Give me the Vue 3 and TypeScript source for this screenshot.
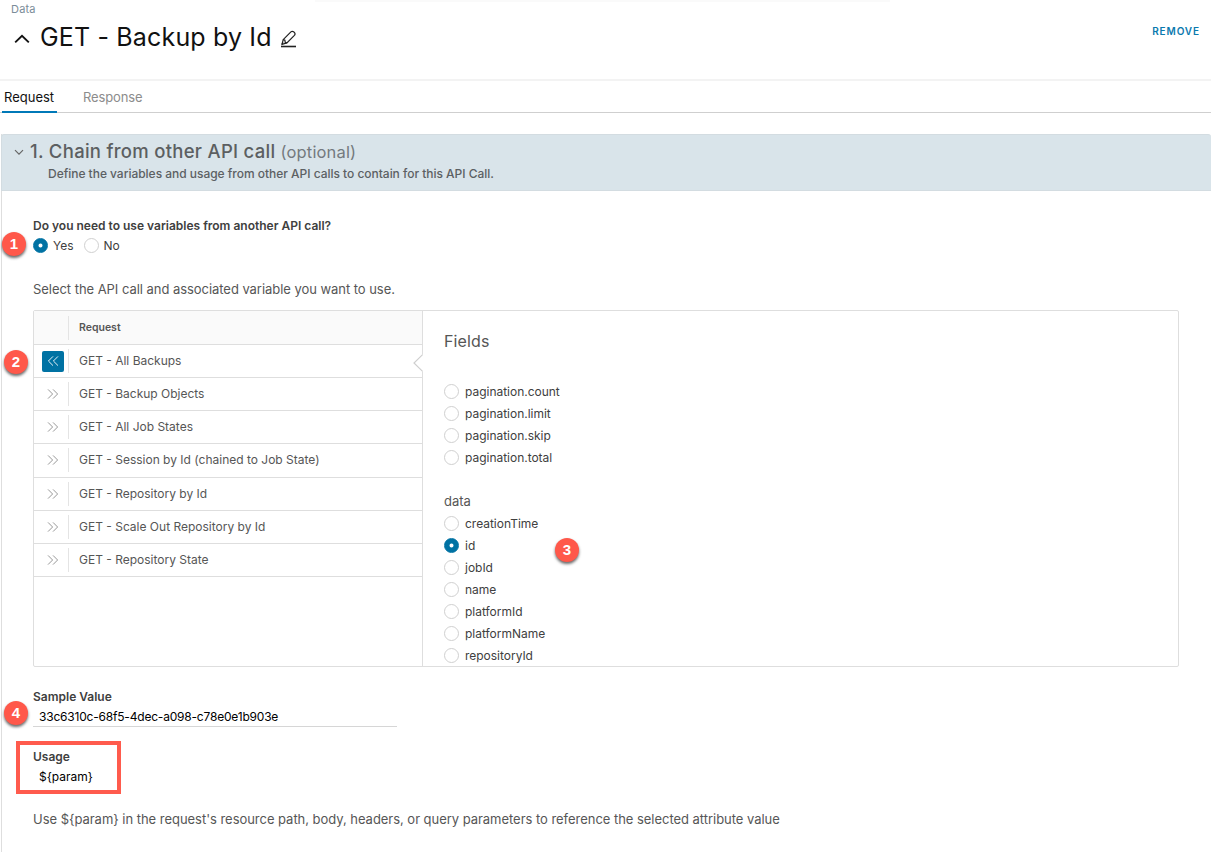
<script setup lang="ts">
import { ref } from 'vue'

interface Field {
  name: string
}

const requests: string[] = [
  'GET - All Backups',
  'GET - Backup Objects',
  'GET - All Job States',
  'GET - Session by Id (chained to Job State)',
  'GET - Repository by Id',
  'GET - Scale Out Repository by Id',
  'GET - Repository State',
]
const activeRequest = ref(0)

const paginationFields: Field[] = [
  { name: 'pagination.count' },
  { name: 'pagination.limit' },
  { name: 'pagination.skip' },
  { name: 'pagination.total' },
]
const dataFields: Field[] = [
  { name: 'creationTime' },
  { name: 'id' },
  { name: 'jobId' },
  { name: 'name' },
  { name: 'platformId' },
  { name: 'platformName' },
  { name: 'repositoryId' },
]
const selectedField = ref('id')
const useVariables = ref(true)
const usage = '${param}'
</script>

<template>
  <div class="page">
    <div class="top-shade"></div>
    <header class="header">
      <div class="crumb">Data</div>
      <div class="title-row">
        <svg class="caret" width="16" height="10" viewBox="0 0 16 10">
          <path d="M1.2 8.4 L8 1.8 L14.8 8.4" />
        </svg>
        <h1 class="title">GET - Backup by Id</h1>
        <svg class="pencil" width="18" height="18" viewBox="0 0 18 18">
          <path d="M3.2 9.6 L10.9 1.9 Q12.2 .7 13.6 1.8 L14.5 2.7 Q15.6 4 14.4 5.3 L6.9 12.9 L2 14.3 Z" />
          <path d="M3.2 9.6 L4.9 10.2 L5.2 12.2 L6.9 12.9 M2 14.3 L3 12.4" />
          <path class="rule" d="M1 16.5 H16" />
        </svg>
        <button class="remove" type="button">REMOVE</button>
      </div>
    </header>

    <nav class="tabs">
      <a class="tab active">Request</a>
      <a class="tab">Response</a>
    </nav>

    <section class="panel">
      <div class="band">
        <svg class="chevron" width="10" height="7" viewBox="0 0 10 7">
          <path d="M1 1.2 L5 5.2 L9 1.2" />
        </svg>
        <div>
          <h2 class="step">1. Chain from other API call <span class="optional">(optional)</span></h2>
          <p class="desc">Define the variables and usage from other API calls to contain for this API Call.</p>
        </div>
      </div>

      <div class="content">
        <div class="question">Do you need to use variables from another API call?</div>
        <div class="answers">
          <span class="badge b1">1</span>
          <label class="choice" @click="useVariables = true">
            <i class="radio" :class="{ on: useVariables }"></i><span>Yes</span>
          </label>
          <label class="choice" @click="useVariables = false">
            <i class="radio" :class="{ on: !useVariables }"></i><span>No</span>
          </label>
        </div>
        <p class="select-hint">Select the API call and associated variable you want to use.</p>

        <div class="picker">
          <div class="requests">
            <div class="row head">
              <div class="cell-icon"></div>
              <div class="cell-name">Request</div>
            </div>
            <div
              v-for="(name, i) in requests"
              :key="name"
              class="row"
              :class="{ active: i === activeRequest }"
              @click="activeRequest = i"
            >
              <span v-if="i === activeRequest" class="badge b2">2</span>
              <div class="cell-icon">
                <span class="toggle">
                  <svg width="12" height="12" viewBox="0 0 12 12">
                    <path d="M1 1.4 L5.6 6 L1 10.6 M6 1.4 L10.6 6 L6 10.6" />
                  </svg>
                </span>
              </div>
              <div class="cell-name">{{ name }}</div>
              <svg v-if="i === activeRequest" class="pointer" width="10" height="18" viewBox="0 0 10 18">
                <path class="fill" d="M10 0 L1 9 L10 18 Z" />
                <path class="edge" d="M9.6 .6 L1 9 L9.6 17.4" />
              </svg>
            </div>
          </div>
          <div class="fields">
            <span class="badge b3">3</span>
            <h3 class="fields-title">Fields</h3>
            <label v-for="f in paginationFields" :key="f.name" class="field" @click="selectedField = f.name">
              <i class="radio" :class="{ on: f.name === selectedField }"></i><span>{{ f.name }}</span>
            </label>
            <div class="group">data</div>
            <label v-for="f in dataFields" :key="f.name" class="field" @click="selectedField = f.name">
              <i class="radio" :class="{ on: f.name === selectedField }"></i><span>{{ f.name }}</span>
            </label>
          </div>
        </div>

        <div class="sample">
          <span class="badge b4">4</span>
          <div class="label">Sample Value</div>
          <div class="value uuid">33c6310c-68f5-4dec-a098-c78e0e1b903e</div>
        </div>
        <div class="usage">
          <div class="label">Usage</div>
          <div class="value">{{ usage }}</div>
        </div>
        <p class="usage-hint">
          Use {{ usage }} in the request's resource path, body, headers, or query parameters to reference the selected attribute value
        </p>
      </div>
    </section>
  </div>
</template>

<style>
body {
  background: #fff;
  overflow: hidden;
}
</style>

<style scoped>
.page {
  position: relative;
  width: 1211px;
  height: 852px;
  overflow: hidden;
  display: flex;
  flex-direction: column;
  background: #fff;
  color: #565656;
  font-family: Inter, "Open Sans", sans-serif;
  font-size: 12px;
  box-sizing: border-box;
}
.page * {
  box-sizing: border-box;
}
h1, h2, h3, p {
  margin: 0;
  font-weight: 400;
}
svg {
  display: block;
  flex: none;
}
path {
  fill: none;
}
.top-shade {
  position: absolute;
  left: 315px;
  top: 0;
  width: 575px;
  height: 2px;
  background: #fafafa;
}
.header {
  height: 81px;
  flex: none;
  border-bottom: 2px solid #f3f3f3;
}
.crumb {
  height: 17px;
  line-height: 18px;
  padding-left: 11px;
  font-size: 11px;
  letter-spacing: 0.2px;
  color: #7b8d99;
}
.title-row {
  display: flex;
  align-items: center;
  height: 40px;
  padding: 0 12px 0 14px;
}
.caret path {
  stroke: #111;
  stroke-width: 1.9;
}
.caret {
  margin-top: 3px;
}
.title {
  width: 232px;
  margin-left: 10px;
  line-height: 36px;
  font-size: 25px;
  letter-spacing: 0.16px;
  color: #111;
  white-space: nowrap;
}
.pencil {
  margin: 3px 0 0 8px;
}
.pencil path {
  stroke: #222;
  stroke-width: 1.2;
}
.pencil .rule {
  stroke-width: 1.6;
}
.remove {
  margin: -13px 0 0 auto;
  padding: 0;
  border: 0;
  background: none;
  font: 600 10px/16px Inter, sans-serif;
  letter-spacing: 0.9px;
  margin-right: -1px;
  color: #0a79ae;
}
.tabs {
  display: flex;
  flex: none;
  height: 32px;
  padding-left: 2px;
  border-bottom: 1px solid #cfcfcf;
}
.tab {
  height: 32px;
  line-height: 33px;
  padding: 0 2px;
  margin-right: 24px;
  font-size: 13px;
  letter-spacing: -0.12px;
  color: #8c8c8c;
}
.tab.active {
  width: 55px;
  letter-spacing: 0;
  color: #111;
  border-bottom: 2px solid #0079b8;
}
.panel {
  flex: 1;
  margin: 21px 0 0 1px;
  border-left: 1px solid #dedede;
}
.band {
  display: flex;
  height: 57px;
  margin-left: -1px;
  padding: 5px 0 0 12px;
  background: #d9e4ea;
  border: 1px solid #d3dce1;
  border-right: 0;
  border-radius: 3px 3px 0 0;
}
.chevron {
  margin-top: 9px;
}
.chevron path {
  stroke: #666;
  stroke-width: 1.2;
}
.step {
  margin-left: 6px;
  line-height: 23px;
  font-size: 18.5px;
  letter-spacing: 0.28px;
  font-weight: 500;
  color: #5c5f61;
  white-space: nowrap;
}
.optional {
  font-size: 16.5px;
  letter-spacing: 0.15px;
  font-weight: 400;
  color: #747a7e;
}
.desc {
  margin-left: 24px;
  line-height: 20px;
  letter-spacing: -0.025px;
  font-weight: 500;
  color: #5c6063;
}
.content {
  padding: 26px 0 0 31px;
}
.question {
  line-height: 18px;
  font-weight: 600;
  color: #404040;
}
.answers {
  position: relative;
  display: flex;
  height: 20px;
  align-items: center;
}
.choice {
  display: flex;
  align-items: center;
  gap: 5px;
  margin-right: 10px;
  color: #404040;
}
.radio {
  flex: none;
  width: 15px;
  height: 15px;
  border: 1px solid #d0d0d0;
  border-radius: 50%;
  background: #fff;
}
.radio.on {
  border-color: #0072a3;
  background: radial-gradient(circle, #fff 1.5px, #0072a3 2.4px);
}
.select-hint {
  margin-top: 24px;
  line-height: 20px;
  font-size: 13px;
  letter-spacing: -0.045px;
}
.picker {
  display: flex;
  width: 1146px;
  height: 357px;
  margin-top: 11px;
  border: 1px solid #dedede;
  border-radius: 2px;
}
.requests {
  width: 389px;
  flex: none;
  border-right: 1px solid #dedede;
}
.row {
  position: relative;
  display: flex;
  align-items: center;
  height: 33.15px;
  border-bottom: 1px solid #dedede;
}
.row.head {
  height: 34px;
  background: #fafafa;
}
.cell-icon {
  display: flex;
  align-items: center;
  padding-left: 8px;
  width: 35px;
  height: 24px;
  border-right: 1px solid #e4e4e4;
}
.cell-name {
  padding-left: 10px;
  line-height: 20px;
  white-space: nowrap;
}
.head .cell-name {
  font-size: 10.5px;
  font-weight: 600;
}
.toggle {
  display: flex;
  align-items: center;
  justify-content: center;
  width: 22px;
  height: 21px;
  border-radius: 2px;
}
.toggle path {
  stroke: #8c8c8c;
  stroke-width: 0.9;
}
.active .toggle {
  background: #0072a3;
}
.active .toggle svg {
  transform: scaleX(-1);
}
.active .toggle path {
  stroke: #fff;
}
.pointer {
  position: absolute;
  right: -1px;
  top: 9px;
}
.pointer .fill {
  fill: #fff;
}
.pointer .edge {
  stroke: #cfcfcf;
  stroke-width: 1.2;
}
.fields {
  position: relative;
  flex: 1;
  padding: 18px 0 0 21px;
}
.fields-title {
  margin-bottom: 27px;
  line-height: 24px;
  font-size: 16px;
  letter-spacing: 0.15px;
}
.field {
  display: flex;
  align-items: center;
  gap: 6px;
  height: 22px;
  letter-spacing: -0.02px;
  color: #404040;
}
.group {
  margin-top: 22px;
  height: 22px;
  line-height: 22px;
  font-size: 13px;
}
.sample {
  position: relative;
  width: 364px;
  margin-top: 20px;
  border-bottom: 1px solid #d6d6d6;
}
.label {
  line-height: 20px;
  font-weight: 600;
  color: #404040;
}
.value {
  padding-left: 6px;
  line-height: 19px;
  color: #000;
}
.uuid {
  letter-spacing: -0.2px;
}
.usage {
  width: 105px;
  height: 53px;
  margin: 14px 0 0 -17px;
  padding: 2px 0 0 13px;
  border: 4px solid #ff5b4d;
}
.usage-hint {
  margin-top: 15px;
  line-height: 20px;
  font-size: 13px;
  letter-spacing: -0.035px;
  white-space: nowrap;
}
.badge {
  position: absolute;
  z-index: 2;
  width: 24px;
  height: 24px;
  border-radius: 50%;
  background: #ff584a;
  box-shadow: 0 2px 3px rgba(0, 0, 0, 0.6);
  color: #fff;
  font: 700 15px/24px "Liberation Sans", Arial, sans-serif;
  text-align: center;
}
.b1 {
  left: -31px;
  top: -3px;
}
.b2 {
  left: -30px;
  top: 5px;
}
.b3 {
  left: 132px;
  top: 227px;
}
.b4 {
  left: -29px;
  top: 14px;
}
</style>
